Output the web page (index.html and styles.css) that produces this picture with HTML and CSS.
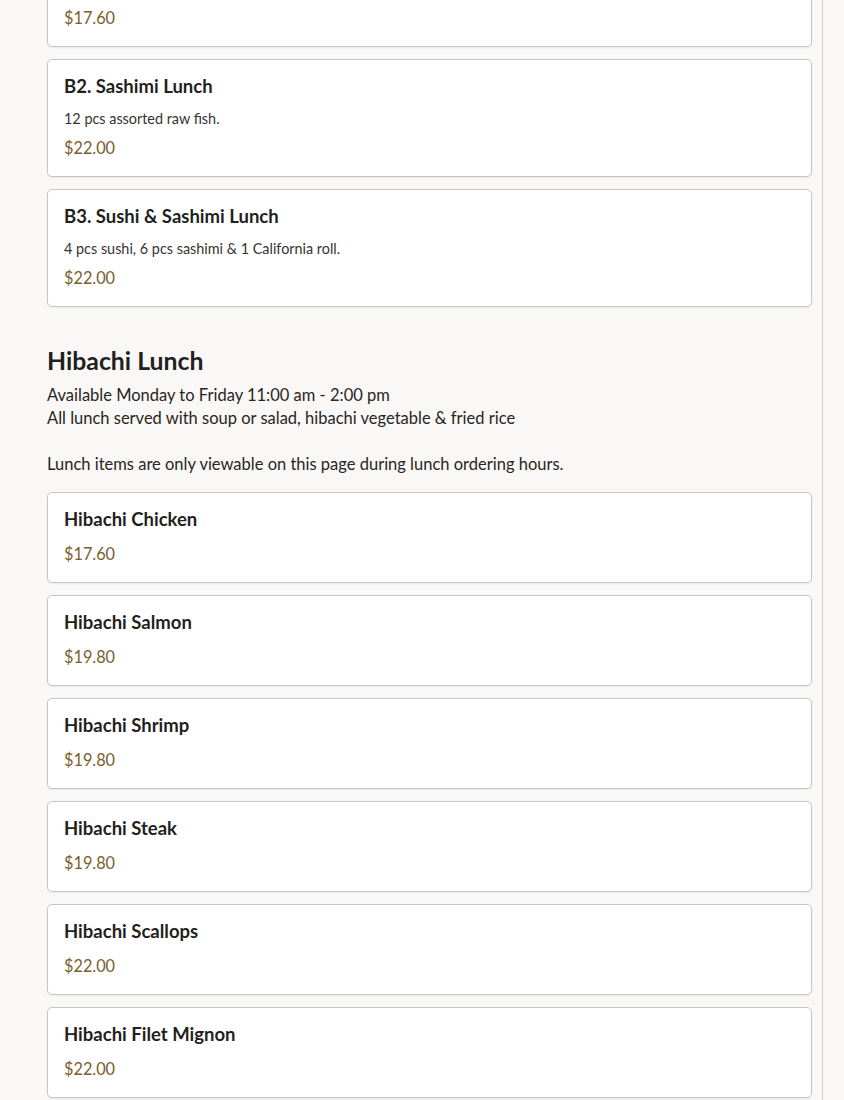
FILE: index.html
```html
<!DOCTYPE html>
<html lang="en">
<head>
<meta charset="utf-8">
<title>Lunch Menu</title>
<link rel="stylesheet" href="styles.css">
</head>
<body>
<div class="page">
  <main class="menu">
    <section class="group group-first">
      <div class="items">
        <article class="card">
          <h3 class="card-title">B1. Sushi Lunch</h3>
          <p class="card-desc">5 pcs sushi &amp; 1 California roll.</p>
          <div class="card-price">$17.60</div>
        </article>
        <article class="card">
          <h3 class="card-title">B2. Sashimi Lunch</h3>
          <p class="card-desc">12 pcs assorted raw fish.</p>
          <div class="card-price">$22.00</div>
        </article>
        <article class="card">
          <h3 class="card-title">B3. Sushi &amp; Sashimi Lunch</h3>
          <p class="card-desc">4 pcs sushi, 6 pcs sashimi &amp; 1 California roll.</p>
          <div class="card-price">$22.00</div>
        </article>
      </div>
    </section>

    <section class="group">
      <h2 class="group-title">Hibachi Lunch</h2>
      <p class="group-desc">Available Monday to Friday 11:00 am - 2:00 pm<br>All lunch served with soup or salad, hibachi vegetable &amp; fried rice<br><br>Lunch items are only viewable on this page during lunch ordering hours.</p>
      <div class="items">
        <article class="card">
          <h3 class="card-title">Hibachi Chicken</h3>
          <div class="card-price">$17.60</div>
        </article>
        <article class="card">
          <h3 class="card-title">Hibachi Salmon</h3>
          <div class="card-price">$19.80</div>
        </article>
        <article class="card">
          <h3 class="card-title">Hibachi Shrimp</h3>
          <div class="card-price">$19.80</div>
        </article>
        <article class="card">
          <h3 class="card-title">Hibachi Steak</h3>
          <div class="card-price">$19.80</div>
        </article>
        <article class="card">
          <h3 class="card-title">Hibachi Scallops</h3>
          <div class="card-price">$22.00</div>
        </article>
        <article class="card">
          <h3 class="card-title">Hibachi Filet Mignon</h3>
          <div class="card-price">$22.00</div>
        </article>
      </div>
    </section>
  </main>
</div>
</body>
</html>
```

FILE: styles.css
```css
html, body {
  margin: 0;
  padding: 0;
  background: #f9f8f6;
}

body {
  font-family: Lato, "Noto Sans", sans-serif;
  color: #231f20;
  overflow: hidden;
}

.page {
  display: flex;
}

.menu {
  box-sizing: border-box;
  width: 823px;
  padding: 0 10px 40px 47px;
  margin-top: -71px;
  border-right: 1px solid #cfcfcf;
  display: flex;
  flex-direction: column;
  gap: 38px;
}

.group {
  display: flex;
  flex-direction: column;
}

.group-title {
  margin: 0;
  font-size: 24.8px;
  line-height: 32px;
  font-weight: 700;
  color: #231f20;
}

.group-desc {
  margin: 7px 0 16px;
  font-size: 16.5px;
  line-height: 23px;
  color: #2a2522;
}

.items {
  display: flex;
  flex-direction: column;
  gap: 12px;
}

.card {
  background: #fff;
  border: 1px solid #c6c6c6;
  border-radius: 5px;
  box-shadow: 0 1px 2px rgba(0, 0, 0, 0.06);
  padding: 15px 16px 17px;
  display: flex;
  flex-direction: column;
}

.card-title {
  margin: 0 0 11px;
  font-size: 18.5px;
  line-height: 23px;
  font-weight: 700;
  color: #231f20;
}

.card-desc {
  margin: 1px 0 8px;
  font-size: 14.4px;
  line-height: 18px;
  color: #3a3230;
}

.card-price {
  font-size: 16.3px;
  line-height: 23px;
  color: #7b5e2e;
}
```
